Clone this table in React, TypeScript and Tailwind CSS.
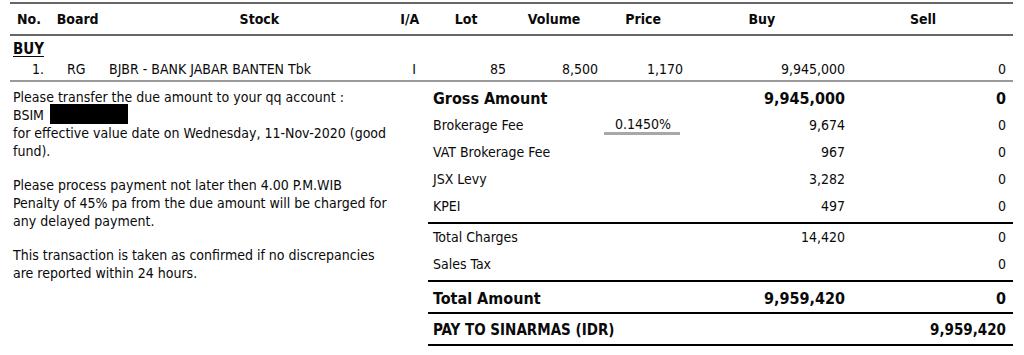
import React from "react";

const font = "font-['DejaVu_Sans_Condensed','DejaVu_Sans',sans-serif]";

type FeeRow = { label: string; fee?: string; buy: string; sell: string };

const fees: FeeRow[] = [
	{ label: "Brokerage Fee", fee: "0.1450%", buy: "9,674", sell: "0" },
	{ label: "VAT Brokerage Fee", buy: "967", sell: "0" },
	{ label: "JSX Levy", buy: "3,282", sell: "0" },
	{ label: "KPEI", buy: "497", sell: "0" },
];

const charges: FeeRow[] = [
	{ label: "Total Charges", buy: "14,420", sell: "0" },
	{ label: "Sales Tax", buy: "", sell: "0" },
];

function SummaryRow({ row }: { row: FeeRow }) {
	return (
		<div className="flex h-[27px] items-center text-[14px]">
			<div className="w-[175px] pl-[5px]">{row.label}</div>
			<div className="w-[80px]">
				{row.fee && (
					<div className="ml-[1px] w-[76px] border-b-[3px] border-[#a8a8a8] pl-[11px] leading-[16px]">
						{row.fee}
					</div>
				)}
			</div>
			<div className="w-[162px] text-right">{row.buy}</div>
			<div className="w-[161px] text-right">{row.sell}</div>
		</div>
	);
}

export default function App() {
	return (
		<div className={`h-[355px] w-[1024px] bg-white text-[#0a0a0a] ${font}`}>
			<div className="ml-[10px] w-[1003px] pt-[2px]">
				{/* header */}
				<div className="flex h-[34px] items-center border-y-2 border-[#666] text-[14px] font-bold whitespace-nowrap">
					<div className="w-[40px] pl-[7px]">No.</div>
					<div className="w-[70px] pl-[7px]">Board</div>
					<div className="flex w-[284px] justify-center">Stock</div>
					<div className="flex w-[20px] justify-center">I/A</div>
					<div className="flex w-[94px] justify-center">Lot</div>
					<div className="flex w-[84px] justify-center">Volume</div>
					<div className="flex w-[96px] justify-center">Price</div>
					<div className="flex w-[144px] justify-center">Buy</div>
					<div className="flex w-[182px] justify-center">Sell</div>
				</div>

				<div className="flex h-[22px] items-end pl-[3px] text-[15px] font-bold leading-[18px]">
					<span className="underline underline-offset-2">BUY</span>
				</div>

				<div className="flex h-[24px] items-center border-b-2 border-[#9a9a9a] text-[14px] whitespace-nowrap">
					<div className="w-[34px] text-right">1.</div>
					<div className="w-[65px] pl-[23px]">RG</div>
					<div className="w-[295px]">BJBR - BANK JABAR BANTEN Tbk</div>
					<div className="flex w-[20px] justify-center">I</div>
					<div className="w-[82px] text-right">85</div>
					<div className="w-[92px] text-right">8,500</div>
					<div className="w-[85px] text-right">1,170</div>
					<div className="w-[162px] text-right">9,945,000</div>
					<div className="w-[161px] text-right">0</div>
				</div>

				{/* summary */}
				<div className="flex">
					<div className="w-[418px] pt-[6px] pl-[3px] text-[14px] leading-[18px] whitespace-nowrap">
						<p>Please transfer the due amount to your qq account :</p>
						<p className="h-[18px]">
							BSIM
							<span className="ml-[6px] inline-block h-[16px] w-[78px] bg-black align-[-4px] shadow-[0_-4px_0_0_#000]" />
						</p>
						<p>for effective value date on Wednesday, 11-Nov-2020 (good</p>
						<p>fund).</p>
						<p className="mt-[16px]">Please process payment not later then 4.00 P.M.WIB</p>
						<p>Penalty of 45% pa from the due amount will be charged for</p>
						<p>any delayed payment.</p>
						<p className="mt-[16px]">This transaction is taken as confirmed if no discrepancies</p>
						<p>are reported within 24 hours.</p>
					</div>

					<div className="w-[585px] pt-[3px]">
						<div className="border-b-2 border-black pb-[2px]">
							<div className="flex h-[27px] items-center text-[16px] font-bold">
								<div className="w-[255px] pl-[5px]">Gross Amount</div>
								<div className="w-[162px] text-right">9,945,000</div>
								<div className="w-[161px] text-right">0</div>
							</div>
							{fees.map((row) => (
								<SummaryRow key={row.label} row={row} />
							))}
						</div>
						<div className="border-b-2 border-black pb-[2px]">
							{charges.map((row) => (
								<SummaryRow key={row.label} row={row} />
							))}
						</div>
						<div className="flex h-[32px] items-center border-b-2 border-black pt-[4px] text-[16px] font-bold">
							<div className="w-[255px] pl-[5px]">Total Amount</div>
							<div className="w-[162px] text-right">9,959,420</div>
							<div className="w-[161px] text-right">0</div>
						</div>
						<div className="flex h-[32px] items-center border-b-2 border-black pt-[2px] text-[15px] font-bold">
							<div className="w-[255px] pl-[5px]">PAY TO SINARMAS (IDR)</div>
							<div className="w-[323px] text-right">9,959,420</div>
						</div>
					</div>
				</div>
			</div>
		</div>
	);
}
